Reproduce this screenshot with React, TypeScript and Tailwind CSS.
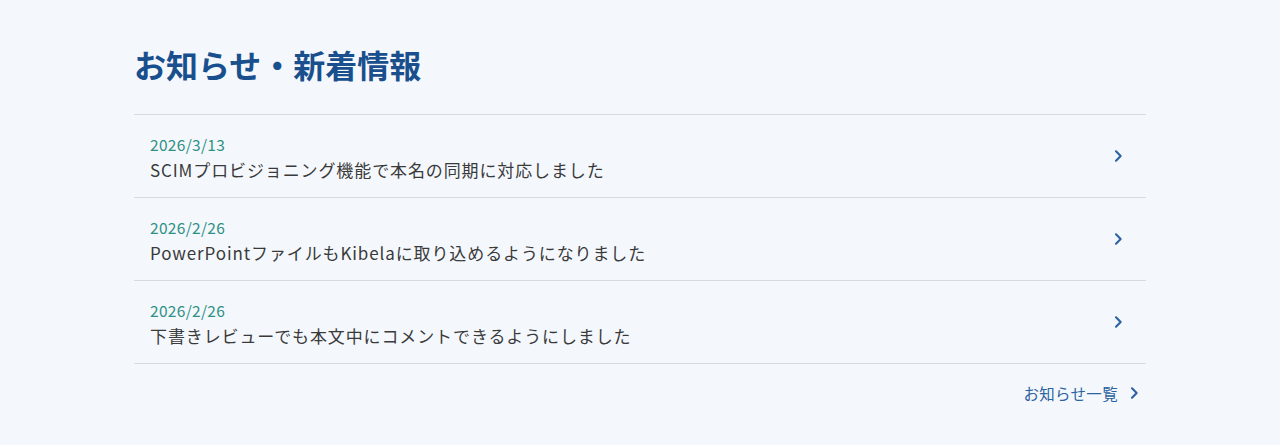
import React from "react";

const items = [
  { date: "2026/3/13", title: "SCIMプロビジョニング機能で本名の同期に対応しました" },
  { date: "2026/2/26", title: "PowerPointファイルもKibelaに取り込めるようになりました" },
  { date: "2026/2/26", title: "下書きレビューでも本文中にコメントできるようにしました" },
];

function Chevron({ className }: { className?: string }) {
  return (
    <svg viewBox="0 0 24 24" className={className} fill="none" stroke="currentColor" strokeWidth={3.2} strokeLinecap="round" strokeLinejoin="round">
      <path d="M9 5l7 7-7 7" />
    </svg>
  );
}

export default function App() {
  return (
    <div
      className="w-[1280px] h-[445px] bg-[#f4f8fd] overflow-hidden"
      style={{ fontFamily: '"Noto Sans CJK JP", "Noto Sans", sans-serif' }}
    >
      <div className="w-[1012px] ml-[134px] pt-[41px]">
        <h2 className="text-[32px] leading-[46px] font-bold text-[#1a4f8d] mb-[27px]">お知らせ・新着情報</h2>
        <ul className="border-t border-[#d5dbe2]">
          {items.map((it, i) => (
            <li key={i} className="border-b border-[#d5dbe2]">
              <a className="flex items-center h-[82px] pl-[16px] pr-[20px]">
                <div className="flex-1 flex flex-col pt-[4px]">
                  <span className="text-[15.5px] leading-[23px] text-[#2f9084] tracking-[0.02em]">{it.date}</span>
                  <span className="text-[17px] leading-[27px] text-[#3a3a3a] tracking-[0.052em]">{it.title}</span>
                </div>
                <Chevron className="w-[16px] h-[16px] text-[#2d63a0]" />
              </a>
            </li>
          ))}
        </ul>
        <div className="flex justify-end items-center pr-[4px] mt-[17px]">
          <span className="text-[15.5px] leading-[24px] text-[#2d63a0] tracking-[0.02em]">お知らせ一覧</span>
          <Chevron className="w-[16px] h-[16px] ml-[8px] text-[#2d63a0]" />
        </div>
      </div>
    </div>
  );
}
